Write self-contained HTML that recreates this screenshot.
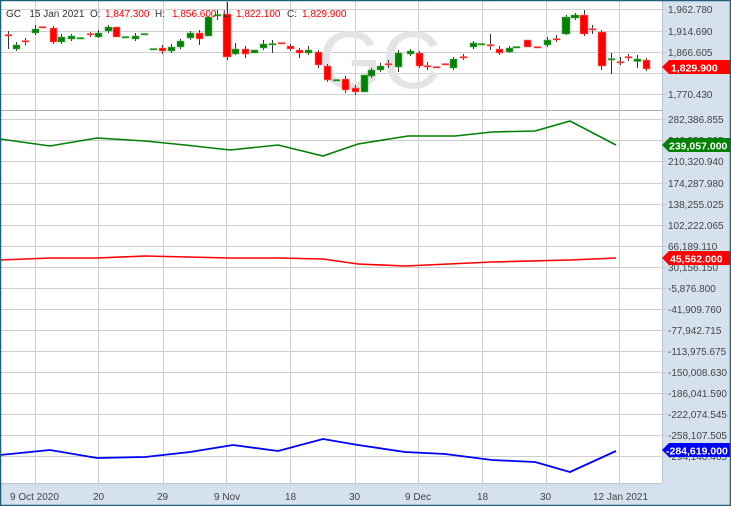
<!DOCTYPE html>
<html><head><meta charset="utf-8"><style>
html,body{margin:0;padding:0;background:#fff;}
svg{display:block;font-family:"Liberation Sans",sans-serif;}
</style></head><body>
<svg width="731" height="506" viewBox="0 0 731 506" xmlns="http://www.w3.org/2000/svg">
<rect x="0" y="0" width="731" height="506" fill="#fff"/>
<!-- axes bg -->
<rect x="662" y="0" width="69" height="506" fill="#d6e1ee"/>
<rect x="0" y="483" width="731" height="23" fill="#d6e1ee"/>
<line x1="662.5" y1="0" x2="662.5" y2="483" stroke="#b8c4d0"/>
<line x1="0" y1="483.5" x2="662" y2="483.5" stroke="#b8c4d0"/>
<line x1="0" y1="110.5" x2="662" y2="110.5" stroke="#b0b0b0"/>
<!-- grid -->
<g stroke="#cfcfcf" stroke-width="1">
<line x1="35.5" y1="0" x2="35.5" y2="489"/><line x1="98.5" y1="0" x2="98.5" y2="489"/>
<line x1="163.5" y1="0" x2="163.5" y2="489"/><line x1="226.5" y1="0" x2="226.5" y2="489"/>
<line x1="290.5" y1="0" x2="290.5" y2="489"/><line x1="355.5" y1="0" x2="355.5" y2="489"/>
<line x1="418.5" y1="0" x2="418.5" y2="489"/><line x1="482.5" y1="0" x2="482.5" y2="489"/>
<line x1="546.5" y1="0" x2="546.5" y2="489"/><line x1="619.5" y1="0" x2="619.5" y2="489"/>
<line x1="0" y1="9.5" x2="667" y2="9.5"/><line x1="0" y1="31.5" x2="667" y2="31.5"/>
<line x1="0" y1="52.5" x2="667" y2="52.5"/><line x1="0" y1="73.5" x2="667" y2="73.5"/>
<line x1="0" y1="94.5" x2="667" y2="94.5"/>
<line x1="0" y1="119.5" x2="667" y2="119.5"/><line x1="0" y1="140.5" x2="667" y2="140.5"/>
<line x1="0" y1="161.5" x2="667" y2="161.5"/><line x1="0" y1="183.5" x2="667" y2="183.5"/>
<line x1="0" y1="204.5" x2="667" y2="204.5"/><line x1="0" y1="225.5" x2="667" y2="225.5"/>
<line x1="0" y1="246.5" x2="667" y2="246.5"/><line x1="0" y1="267.5" x2="667" y2="267.5"/>
<line x1="0" y1="288.5" x2="667" y2="288.5"/><line x1="0" y1="309.5" x2="667" y2="309.5"/>
<line x1="0" y1="330.5" x2="667" y2="330.5"/><line x1="0" y1="351.5" x2="667" y2="351.5"/>
<line x1="0" y1="372.5" x2="667" y2="372.5"/><line x1="0" y1="393.5" x2="667" y2="393.5"/>
<line x1="0" y1="414.5" x2="667" y2="414.5"/><line x1="0" y1="435.5" x2="667" y2="435.5"/>
<line x1="0" y1="456.5" x2="667" y2="456.5"/>
</g>
<!-- watermark -->
<text x="318" y="88" font-size="82" fill="#e4e4e4">GC</text>
<!-- candles -->
<g stroke="#333" stroke-width="1">
<line x1="8.5" y1="31" x2="8.5" y2="49"/><line x1="16.5" y1="42" x2="16.5" y2="51"/><line x1="25.5" y1="38" x2="25.5" y2="45"/>
<line x1="35.5" y1="25" x2="35.5" y2="35"/><line x1="53.5" y1="26" x2="53.5" y2="44"/><line x1="61.5" y1="34" x2="61.5" y2="44"/>
<line x1="71.5" y1="34" x2="71.5" y2="41"/><line x1="90.5" y1="32" x2="90.5" y2="37"/><line x1="98.5" y1="30" x2="98.5" y2="38"/>
<line x1="108.5" y1="25" x2="108.5" y2="33"/><line x1="135.5" y1="33" x2="135.5" y2="41"/><line x1="162.5" y1="45" x2="162.5" y2="54"/>
<line x1="171.5" y1="44" x2="171.5" y2="53"/><line x1="180.5" y1="39" x2="180.5" y2="49"/><line x1="190.5" y1="31" x2="190.5" y2="40"/>
<line x1="199.5" y1="30" x2="199.5" y2="45"/><line x1="217.5" y1="10" x2="217.5" y2="20"/><line x1="227.5" y1="2" x2="227.5" y2="60"/>
<line x1="235.5" y1="43" x2="235.5" y2="55"/><line x1="245.5" y1="46" x2="245.5" y2="58"/><line x1="263.5" y1="40" x2="263.5" y2="50"/>
<line x1="272.5" y1="40" x2="272.5" y2="53"/><line x1="290.5" y1="44" x2="290.5" y2="51"/><line x1="299.5" y1="48" x2="299.5" y2="58"/>
<line x1="308.5" y1="46" x2="308.5" y2="55"/><line x1="318.5" y1="50" x2="318.5" y2="68"/><line x1="327.5" y1="64" x2="327.5" y2="82"/>
<line x1="345.5" y1="76" x2="345.5" y2="93"/><line x1="355.5" y1="85" x2="355.5" y2="95"/><line x1="371.5" y1="68" x2="371.5" y2="78"/>
<line x1="380.5" y1="63" x2="380.5" y2="72"/><line x1="388.5" y1="60" x2="388.5" y2="68"/><line x1="398.5" y1="50" x2="398.5" y2="72"/>
<line x1="410.5" y1="49" x2="410.5" y2="56"/><line x1="419.5" y1="51" x2="419.5" y2="68"/><line x1="427.5" y1="62" x2="427.5" y2="70"/>
<line x1="453.5" y1="57" x2="453.5" y2="70"/><line x1="463.5" y1="54" x2="463.5" y2="60"/><line x1="473.5" y1="41" x2="473.5" y2="49"/>
<line x1="490.5" y1="34" x2="490.5" y2="50"/><line x1="499.5" y1="46" x2="499.5" y2="55"/><line x1="509.5" y1="46" x2="509.5" y2="53"/>
<line x1="547.5" y1="37" x2="547.5" y2="47"/><line x1="556.5" y1="35" x2="556.5" y2="42"/><line x1="566.5" y1="15" x2="566.5" y2="35"/>
<line x1="575.5" y1="13" x2="575.5" y2="20"/><line x1="584.5" y1="10" x2="584.5" y2="36"/><line x1="592.5" y1="25" x2="592.5" y2="34"/>
<line x1="601.5" y1="30" x2="601.5" y2="70"/><line x1="611.5" y1="53" x2="611.5" y2="74"/><line x1="620.5" y1="57" x2="620.5" y2="65"/>
<line x1="628.5" y1="54" x2="628.5" y2="61"/><line x1="637.5" y1="55" x2="637.5" y2="68"/><line x1="646.5" y1="58" x2="646.5" y2="71"/>
</g>
<g fill="#008000" stroke="#5cb85c" stroke-width="0.6">
<rect x="13" y="45" width="7" height="4"/><rect x="32" y="29" width="7" height="4"/><rect x="58" y="37" width="7" height="5"/>
<rect x="68" y="36" width="7" height="3"/><rect x="77" y="37.5" width="7" height="1.5"/><rect x="95" y="33" width="7" height="4"/>
<rect x="105" y="27" width="7" height="4"/><rect x="122" y="36.5" width="7" height="1.5"/><rect x="132" y="36" width="7" height="3"/>
<rect x="141" y="33.5" width="7" height="1.5"/><rect x="150" y="48.5" width="7" height="1.5"/><rect x="168" y="47" width="7" height="4"/>
<rect x="177" y="41" width="7" height="6"/><rect x="187" y="33" width="7" height="5"/><rect x="205" y="17" width="7" height="19"/>
<rect x="214" y="14.5" width="7" height="1.5"/><rect x="232" y="49" width="7" height="5"/><rect x="251" y="50" width="7" height="3"/>
<rect x="260" y="44" width="7" height="4"/><rect x="269" y="43.5" width="7" height="1.5"/><rect x="305" y="50" width="7" height="3"/>
<rect x="333" y="79.5" width="7" height="1.5"/><rect x="361" y="75" width="7" height="17"/><rect x="368" y="70" width="7" height="6"/>
<rect x="377" y="66" width="7" height="4"/><rect x="395" y="53" width="7" height="14"/><rect x="407" y="51" width="7" height="3"/>
<rect x="450" y="59" width="7" height="9"/><rect x="470" y="43" width="7" height="4"/><rect x="478" y="43.5" width="7" height="1.5"/>
<rect x="506" y="48" width="7" height="4"/><rect x="513" y="46.5" width="7" height="1.5"/><rect x="544" y="40" width="7" height="5"/>
<rect x="562" y="17" width="8" height="17"/><rect x="571" y="15" width="8" height="3"/><rect x="608" y="58.5" width="7" height="1.5"/>
<rect x="634" y="59" width="7" height="2.5"/>
</g>
<g fill="#ff0000" stroke="#ff8080" stroke-width="0.6">
<rect x="5" y="34.5" width="7" height="1.5"/><rect x="22" y="40.5" width="7" height="1.5"/><rect x="39" y="26.5" width="7" height="1.5"/>
<rect x="50" y="28" width="7" height="14"/><rect x="87" y="33.5" width="7" height="1.5"/><rect x="113" y="27" width="7" height="10"/>
<rect x="159" y="48" width="7" height="3"/><rect x="196" y="33" width="7" height="6"/><rect x="223" y="14" width="8" height="43"/>
<rect x="242" y="49" width="7" height="5"/><rect x="278" y="42.5" width="7" height="1.5"/><rect x="287" y="46" width="7" height="3"/>
<rect x="296" y="50" width="7" height="3"/><rect x="315" y="52" width="7" height="13"/><rect x="324" y="66" width="7" height="14"/>
<rect x="342" y="79" width="7" height="11"/><rect x="352" y="88" width="7" height="4"/><rect x="385" y="63.5" width="7" height="1.5"/>
<rect x="416" y="53" width="7" height="13"/><rect x="424" y="65.5" width="7" height="1.5"/><rect x="433" y="66.5" width="7" height="1.5"/>
<rect x="442" y="63.5" width="7" height="1.5"/><rect x="460" y="56.5" width="7" height="1.5"/><rect x="487" y="44.5" width="7" height="1.5"/>
<rect x="496" y="49" width="7" height="4"/><rect x="524" y="40" width="7" height="7"/><rect x="534" y="46.5" width="7" height="1.5"/>
<rect x="553" y="38.5" width="7" height="1.5"/><rect x="580" y="15" width="8" height="19"/><rect x="589" y="28.5" width="7" height="1.5"/>
<rect x="598" y="32" width="8" height="34"/><rect x="617" y="61.5" width="7" height="1.5"/><rect x="625" y="56.5" width="7" height="1.5"/>
<rect x="643" y="60" width="7" height="9"/>
</g>
<!-- header -->
<text x="6" y="17" font-size="10" fill="#333">GC&#160;&#160;&#160;15 Jan 2021&#160;&#160;O:</text>
<text x="105" y="17" font-size="10" fill="#ff0000">1,847.300</text>
<text x="155" y="17" font-size="10" fill="#333">H:</text>
<text x="172" y="17" font-size="10" fill="#ff0000">1,856.600</text>
<text x="223" y="17" font-size="10" fill="#333">L:</text>
<text x="236" y="17" font-size="10" fill="#ff0000">1,822.100</text>
<text x="287" y="17" font-size="10" fill="#333">C:</text>
<text x="302" y="17" font-size="10" fill="#ff0000">1,829.900</text>
<!-- lines -->
<polyline fill="none" stroke="#008000" stroke-width="1.6" points="0,139 50,146 97,138 145,141 185,145 230,150 278,145 323,156 358,144 408,136 455,136 492,132 535,131 570,121 616,145"/>
<polyline fill="none" stroke="#ff0000" stroke-width="1.6" points="0,260 50,258 97,258 145,256 230,258 278,258 323,259 358,264 405,266 492,262 570,260 616,258"/>
<polyline fill="none" stroke="#0000ff" stroke-width="1.8" points="0,455 50,450 97,458 145,457 190,452 233,445 278,451 323,439 358,445 405,452 445,454 492,460 535,462 570,472 616,451"/>
<!-- axis labels -->
<g font-size="10" fill="#444">
<text x="668" y="13">1,962.780</text><text x="668" y="35">1,914.690</text><text x="668" y="56">1,866.605</text>
<text x="668" y="98">1,770.430</text>
<text x="668" y="123">282,386.855</text><text x="668" y="144">246,353.895</text><text x="668" y="165">210,320.940</text>
<text x="668" y="187">174,287.980</text><text x="668" y="208">138,255.025</text><text x="668" y="229">102,222.065</text>
<text x="668" y="250">66,189.110</text><text x="668" y="271">30,156.150</text><text x="668" y="292">-5,876.800</text>
<text x="668" y="313">-41,909.760</text><text x="668" y="334">-77,942.715</text><text x="668" y="355">-113,975.675</text>
<text x="668" y="376">-150,008.630</text><text x="668" y="397">-186,041.590</text><text x="668" y="418">-222,074.545</text>
<text x="668" y="439">-258,107.505</text><text x="668" y="460">-294,140.465</text>
<text x="10" y="500">9 Oct 2020</text><text x="93" y="500">20</text><text x="157" y="500">29</text>
<text x="214" y="500">9 Nov</text><text x="285" y="500">18</text><text x="349" y="500">30</text>
<text x="405" y="500">9 Dec</text><text x="477" y="500">18</text><text x="540" y="500">30</text>
<text x="593" y="500">12 Jan 2021</text>
</g>
<!-- badges -->
<polygon points="662,67 669,60 731,60 731,74 669,74" fill="#ff0000"/>
<text x="671" y="71.5" font-size="10.5" fill="#fff" font-weight="bold">1,829.900</text>
<polygon points="662,145 669,138 731,138 731,152 669,152" fill="#008000"/>
<text x="669" y="149.5" font-size="10.5" fill="#fff" font-weight="bold">239,057.000</text>
<polygon points="662,258 669,251 731,251 731,265 669,265" fill="#ff0000"/>
<text x="670" y="262.5" font-size="10.5" fill="#fff" font-weight="bold">45,562.000</text>
<polygon points="662,450 669,443 731,443 731,457 669,457" fill="#0000ff"/>
<text x="666" y="454.5" font-size="10.5" fill="#fff" font-weight="bold">-284,619.000</text>
<!-- frame -->
<rect x="0.5" y="0.5" width="730" height="505" fill="none" stroke="#1e5f7a" stroke-width="1.5"/>
</svg>
</body></html>
